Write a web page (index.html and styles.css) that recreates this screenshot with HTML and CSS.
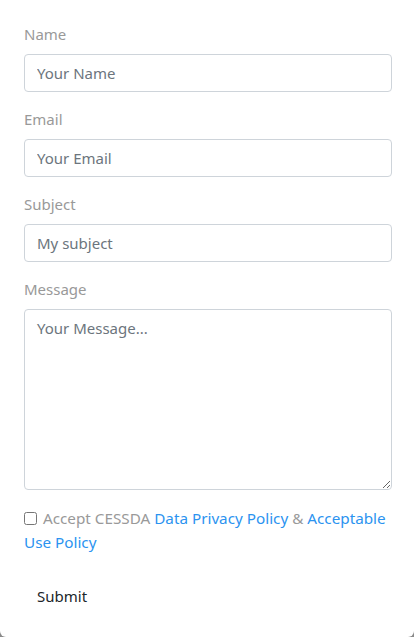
FILE: index.html
```html
<!DOCTYPE html>
<html>
<head>
    <title>Contact</title>
    <link rel="stylesheet" href="styles.css">
</head>
<body>
    <div class="modal-card">
        <form class="contact-form">
            <div class="form-group">
                <label for="name">Name</label>
                <input id="name" class="form-control" type="text" placeholder="Your Name">
            </div>
            <div class="form-group">
                <label for="email">Email</label>
                <input id="email" class="form-control" type="email" placeholder="Your Email">
            </div>
            <div class="form-group">
                <label for="subject">Subject</label>
                <input id="subject" class="form-control" type="text" placeholder="My subject">
            </div>
            <div class="form-group">
                <label for="message">Message</label>
                <textarea id="message" class="form-control message" placeholder="Your Message..."></textarea>
            </div>
            <div class="form-check">
                <input id="accept" type="checkbox" class="check">
                <label for="accept" class="check-label">Accept CESSDA <a href="#">Data Privacy Policy</a> &amp; <a href="#">Acceptable Use Policy</a></label>
            </div>
            <button type="button" class="btn-submit">Submit</button>
        </form>
    </div>
</body>
</html>
```

FILE: styles.css
```css
html, body {
    margin: 0;
    height: 100%;
}
body {
    background: #8a8a8a;
    font-family: 'Noto Sans', 'Open Sans', sans-serif;
    overflow: hidden;
}
.modal-card {
    background: #fff;
    min-height: 637px;
    border-radius: 0 0 6px 6px;
    box-sizing: border-box;
    padding: 23px 22px 0 24px;
}
.form-group {
    margin-bottom: 16px;
}
.form-group label {
    display: block;
    font-size: 15px;
    line-height: 23px;
    color: #999;
    margin-bottom: 8px;
}
.form-control {
    display: block;
    width: 100%;
    box-sizing: border-box;
    height: 38px;
    padding: 6px 12px;
    font-family: inherit;
    font-size: 15px;
    line-height: 24px;
    color: #495057;
    background: #fff;
    border: 1px solid #ced4da;
    border-radius: 4px;
}
.form-control::placeholder {
    color: #6c757d;
}
.message {
    height: 181px;
    resize: vertical;
}
.form-check {
    font-size: 15.25px;
    line-height: 24px;
    color: #999;
}
.check {
    width: 13px;
    height: 13px;
    margin: 0 2px 0 0;
    vertical-align: -1px;
}
.check-label a {
    color: #2b93f0;
    text-decoration: none;
}
.btn-submit {
    margin-top: 24px;
    padding: 6px 13px;
    background: transparent;
    border: none;
    font-family: inherit;
    font-size: 15px;
    line-height: 24px;
    color: #212529;
}
```
